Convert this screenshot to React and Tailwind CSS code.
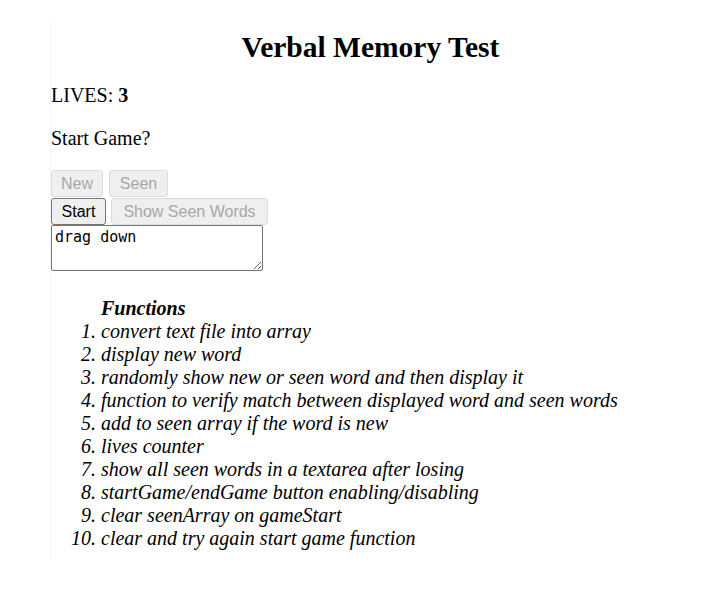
import { useState } from "react";

const functions = [
  "convert text file into array",
  "display new word",
  "randomly show new or seen word and then display it",
  "function to verify match between displayed word and seen words",
  "add to seen array if the word is new",
  "lives counter",
  "show all seen words in a textarea after losing",
  "startGame/endGame button enabling/disabling",
  "clear seenArray on gameStart",
  "clear and try again start game function",
];

const btnBase =
  "h-[27px] rounded-[3px] border text-[16px] leading-[18px] text-center bg-[#efefef] font-['Liberation_Sans',Arial,sans-serif]";
const btnDisabled = "border-[#dcdcdc] text-[#a8a8a8]";
const btnEnabled = "border-[#767676] text-black";

export default function App() {
  const [lives] = useState(3);
  const [notes, setNotes] = useState("drag down");

  return (
    <div className="min-h-[593px] bg-white pt-[22px] font-['Liberation_Serif','Times_New_Roman',serif] text-black">
      <div className="ml-[50px] w-[640px] border-l border-[#f5f5f5] pt-[9px] pb-[10px]">
        <h1 className="text-center text-[29.5px] leading-[32px] font-bold">Verbal Memory Test</h1>

        <p className="mt-[21px] text-[20px] leading-[23px]">
          LIVES: <b>{lives}</b>
        </p>

        <p className="mt-[20px] text-[20px] leading-[23px]">Start Game?</p>

        <div className="mt-[20px] flex flex-col gap-[1px]">
          <div className="flex gap-[6px]">
            <button disabled className={`${btnBase} ${btnDisabled} w-[52px]`}>New</button>
            <button disabled className={`${btnBase} ${btnDisabled} w-[59px]`}>Seen</button>
          </div>
          <div className="flex gap-[5px]">
            <button className={`${btnBase} ${btnEnabled} w-[55px]`}>Start</button>
            <button disabled className={`${btnBase} ${btnDisabled} w-[157px]`}>Show Seen Words</button>
          </div>
          <textarea
            value={notes}
            onChange={(e) => setNotes(e.target.value)}
            className="-mt-[1px] block h-[46px] w-[212px] rounded-[2px] border border-[#767676] px-[3px] pt-[2px] text-[15px] leading-[18px] font-['DejaVu_Sans_Mono',monospace] resize"
          />
        </div>

        <div className="mt-[26px] pl-[50px] text-[20px] leading-[23px] italic">
          <div className="font-bold">Functions</div>
          <ol className="list-decimal">
            {functions.map((f, i) => (
              <li key={i}>{f}</li>
            ))}
          </ol>
        </div>
      </div>
    </div>
  );
}
